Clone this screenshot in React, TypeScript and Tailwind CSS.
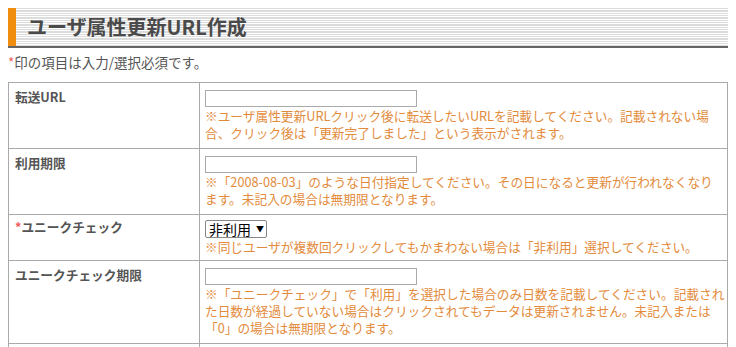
import React from 'react';

const font = "font-['Meiryo','Noto_Sans_CJK_JP',sans-serif]";

interface FieldRow {
  label: string;
  required?: boolean;
  control: 'input' | 'select';
  notes: string[];
}

const rows: FieldRow[] = [
  {
    label: '転送URL',
    control: 'input',
    notes: [
      '※ユーザ属性更新URLクリック後に転送したいURLを記載してください。記載されない場',
      '合、クリック後は「更新完了しました」という表示がされます。',
    ],
  },
  {
    label: '利用期限',
    control: 'input',
    notes: [
      '※「2008-08-03」のような日付指定してください。その日になると更新が行われなくなり',
      'ます。未記入の場合は無期限となります。',
    ],
  },
  {
    label: 'ユニークチェック',
    required: true,
    control: 'select',
    notes: ['※同じユーザが複数回クリックしてもかまわない場合は「非利用」選択してください。'],
  },
  {
    label: 'ユニークチェック期限',
    control: 'input',
    notes: [
      '※「ユニークチェック」で「利用」を選択した場合のみ日数を記載してください。記載され',
      'た日数が経過していない場合はクリックされてもデータは更新されません。未記入または',
      '「0」の場合は無期限となります。',
    ],
  },
];

const App: React.FC = () => {
  return (
    <div className={`min-h-screen bg-white px-2 pt-2 ${font}`}>
      {/* Page title */}
      <div className="border-b-2 border-[#666]">
        <div className="flex h-[38px]">
          <div className="w-2 bg-[#f08c0e]" />
          <div className="flex flex-1 items-center bg-[repeating-linear-gradient(to_bottom,#dcdcdc_0px,#dcdcdc_1.33px,#ffffff_1.33px,#ffffff_2.33px)] pl-[11px]">
            <h1 className="text-[20px] font-bold leading-none text-[#4a4a4a]">ユーザ属性更新URL作成</h1>
          </div>
        </div>
      </div>

      <p className="mt-1 text-[13.5px] leading-[20px] text-[#555]">
        <span className="text-[#f05a5a]">*</span>印の項目は入力/選択必須です。
      </p>

      <table className="mt-[10px] w-full border-collapse text-[12.7px] leading-[17px]">
        <tbody>
          {rows.map(row => (
            <tr key={row.label}>
              <td className={`w-[191px] border border-[#aaa] px-[6px] align-top font-bold text-[#555] ${row.control === 'select' ? 'pt-[3px]' : 'pt-[5px]'}`}>
                {row.required && <span className="text-[#f05a5a]">*</span>}
                {row.label}
              </td>
              <td className={`border border-[#aaa] pl-[5px] align-top ${row.control === 'select' ? 'pt-[5px] pb-[5px]' : 'pt-[7px] pb-[7px]'}`}>
                {row.control === 'input' ? (
                  <div className="h-[17px] w-[212px] border border-[#aaa] bg-white" />
                ) : (
                  <div className="flex h-[18px] w-[62px] items-center gap-[5px] rounded-[2px] border border-[#888] bg-white pl-[3px] text-[14px] leading-none text-black">
                    <span>非利用</span>
                    <span className="text-[8px]">▼</span>
                  </div>
                )}
                <div className="whitespace-nowrap text-[#e38b3c]">
                  {row.notes.map((line, i) => (
                    <div key={i}>{line}</div>
                  ))}
                </div>
              </td>
            </tr>
          ))}
          <tr>
            <td className="h-[40px] border border-[#aaa]" />
            <td className="border border-[#aaa]" />
          </tr>
        </tbody>
      </table>
    </div>
  );
};

export default App;
